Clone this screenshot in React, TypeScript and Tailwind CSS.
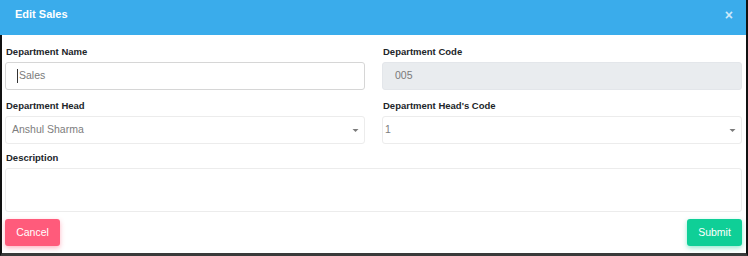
import React from "react";

const FONT = "font-['Liberation_Sans',Arial,sans-serif]";

function Label({ children, className = "" }: { children: React.ReactNode; className?: string }) {
  return (
    <div className={`h-[12px] pl-[1px] text-[9.5px] font-bold leading-[12px] text-[#212529] ${className}`}>
      {children}
    </div>
  );
}

function Caret() {
  return (
    <svg viewBox="0 0 10 5" className="h-[3px] w-[7px]" fill="#7b7b7b">
      <path d="M0 0h10L5 5z" />
    </svg>
  );
}

function SelectBox({ value, pad }: { value: string; pad: string }) {
  return (
    <div
      className={`mt-[4px] flex h-[28px] items-center justify-between rounded-[3px] border border-[#ececec] bg-white ${pad} pr-[5px] text-[10.5px] text-[#7d7d7d]`}
    >
      <span>{value}</span>
      <Caret />
    </div>
  );
}

export default function App() {
  return (
    <div className={`flex h-[256px] w-[748px] flex-col bg-white ${FONT}`}>
      {/* header */}
      <div className="flex h-[35px] shrink-0 items-start justify-between border-r-2 border-[#111] bg-[#3aaceb] pl-[15px] pr-[13px] pt-[8px]">
        <span className="text-[11px] font-bold leading-[13px] text-white">Edit Sales</span>
        <span className="text-[14px] font-bold leading-[14px] text-white/75">×</span>
      </div>

      {/* body */}
      <div className="flex flex-1 flex-col border-b-[3px] border-l-2 border-r-2 border-b-[#3a3a3a] border-l-[#111] border-r-[#111] pl-[3px] pr-[4px] pt-[11px]">
        <div className="grid grid-cols-2 gap-x-[17px]">
          <div>
            <Label>Department Name</Label>
            <div className="mt-[4px] flex h-[28px] items-center rounded-[3px] border border-[#d6d6d6] bg-white pl-[11px] text-[10.5px] text-[#7a7a7a]">
              <span className="mr-[1px] h-[14px] w-px bg-[#333]" />
              <span>Sales</span>
            </div>
          </div>
          <div>
            <Label>Department Code</Label>
            <div className="mt-[4px] flex h-[28px] items-center rounded-[3px] border border-[#e3e6ea] bg-[#e9ecef] pl-[12px] text-[10.5px] text-[#7a7a7a]">
              005
            </div>
          </div>

          <div className="mt-[10px]">
            <Label>Department Head</Label>
            <SelectBox value="Anshul Sharma" pad="pl-[6px]" />
          </div>
          <div className="mt-[10px]">
            <Label>Department Head's Code</Label>
            <SelectBox value="1" pad="pl-[2px]" />
          </div>
        </div>

        <div className="mt-[8px]">
          <Label>Description</Label>
          <div className="mt-[4px] h-[44px] rounded-[3px] border border-[#ececec] bg-white" />
        </div>

        <div className="mt-[7px] flex justify-between">
          <button className="h-[27px] w-[55px] rounded-[3px] bg-[#ff5b7b] text-[10.5px] text-white shadow-[0_2px_5px_rgba(255,91,123,0.45)]">
            Cancel
          </button>
          <button className="h-[27px] w-[55px] rounded-[3px] bg-[#0fcf97] text-[10.5px] text-white shadow-[0_2px_5px_rgba(15,207,151,0.45)]">
            Submit
          </button>
        </div>
      </div>
    </div>
  );
}
